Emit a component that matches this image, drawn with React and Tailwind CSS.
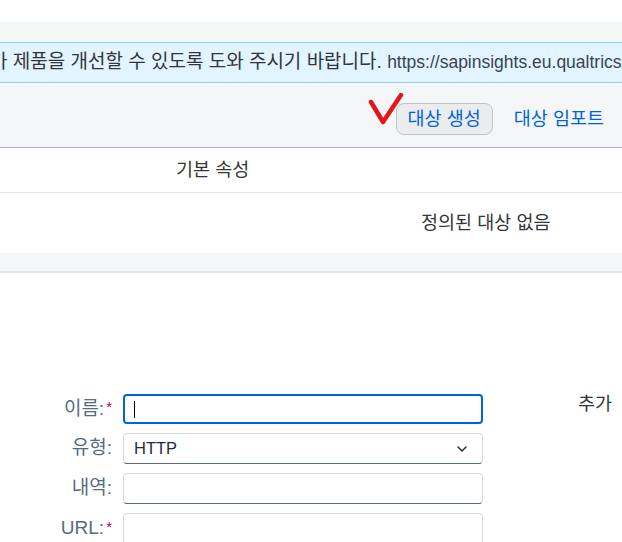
import React from 'react';
import { ChevronDown } from 'lucide-react';

const font = { fontFamily: '"Liberation Sans", "Noto Sans CJK KR", sans-serif' };

function FieldLabel({ text, required }) {
  return (
    <div className="w-[112px] flex justify-end items-center text-[19px] text-[#556b82]">
      <span>{text}</span>
      {required && <span className="ml-[2px] text-[15px] leading-none -mt-[5px] text-[#c0005b]">*</span>}
    </div>
  );
}

export default function App() {
  return (
    <div className="w-[622px] h-[542px] overflow-hidden bg-white" style={font}>
      <div className="h-[22px] bg-white" />

      {/* gray page area */}
      <div className="bg-[#f5f6f7] pt-[20px] border-b-2 border-[#e4e7ea]">
        {/* info strip */}
        <div className="h-[41px] bg-[#e1f4ff] border-y border-[#89cff7] flex items-center overflow-hidden whitespace-nowrap">
          <span className="ml-[-10px] text-[19px] text-[#32363a]">
            가 제품을 개선할 수 있도록 도와 주시기 바랍니다.{' '}
            <span className="text-[17.5px] text-[#3a4450]">https://sapinsights.eu.qualtrics.com</span>
          </span>
        </div>

        {/* toolbar */}
        <div className="h-[65px] border-b border-[#a9b4be] flex justify-end items-start pt-[20px] pr-[18px]">
          <div className="relative">
            <button className="h-[32px] px-[11px] rounded-[8px] border border-[#bcc3ca] bg-[#eaecee] text-[18.5px] leading-none text-[#0064d9]">
              대상 생성
            </button>
            <svg className="absolute left-[-28px] top-[-11px]" width="40" height="36" viewBox="0 0 40 36">
              <path d="M3 10 L15 30 L33 3" fill="none" stroke="#e3161c" strokeWidth="4.5" strokeLinecap="round" strokeLinejoin="round" />
            </svg>
          </div>
          <span className="ml-[21px] h-[32px] flex items-center text-[18.5px] text-[#0064d9]">대상 임포트</span>
        </div>

        {/* table */}
        <div className="bg-white">
          <div className="h-[45px] border-b border-[#e5e5e5] flex items-center pl-[176px] text-[18.5px] text-[#32363a]">
            기본 속성
          </div>
          <div className="h-[60px] flex items-center pl-[421px] text-[18.5px] text-[#32363a]">
            정의된 대상 없음
          </div>
        </div>
        <div className="h-[18px]" />
      </div>

      {/* form */}
      <div className="flex pt-[121px]">
        <div className="flex flex-col gap-[9px]">
          <div className="flex items-center gap-[11px]">
            <FieldLabel text="이름:" required />
            <div className="w-[360px] h-[30px] rounded-[4px] border-2 border-[#0064d9] bg-white flex items-center pl-[9px]">
              <span className="w-px h-[17px] bg-black" />
            </div>
          </div>
          <div className="flex items-center gap-[11px]">
            <FieldLabel text="유형:" />
            <div className="w-[360px] h-[31px] rounded-[4px] border border-[#d5dadd] border-b-[#556b82] bg-white flex items-center justify-between pl-[10px] pr-[12px] text-[16.5px] text-[#1d2d3e]">
              <span>HTTP</span>
              <ChevronDown size={16} strokeWidth={2.2} className="text-[#1d2d3e]" />
            </div>
          </div>
          <div className="flex items-center gap-[11px]">
            <FieldLabel text="내역:" />
            <div className="w-[360px] h-[31px] rounded-[4px] border border-[#d5dadd] border-b-[#556b82] bg-white" />
          </div>
          <div className="flex items-center gap-[11px]">
            <FieldLabel text="URL:" required />
            <div className="w-[360px] h-[31px] rounded-[4px] border border-[#d5dadd] border-b-[#556b82] bg-white" />
          </div>
        </div>
        <div className="ml-[95px] -mt-[4px] text-[18.5px] text-[#32363a]">추가</div>
      </div>
    </div>
  );
}
